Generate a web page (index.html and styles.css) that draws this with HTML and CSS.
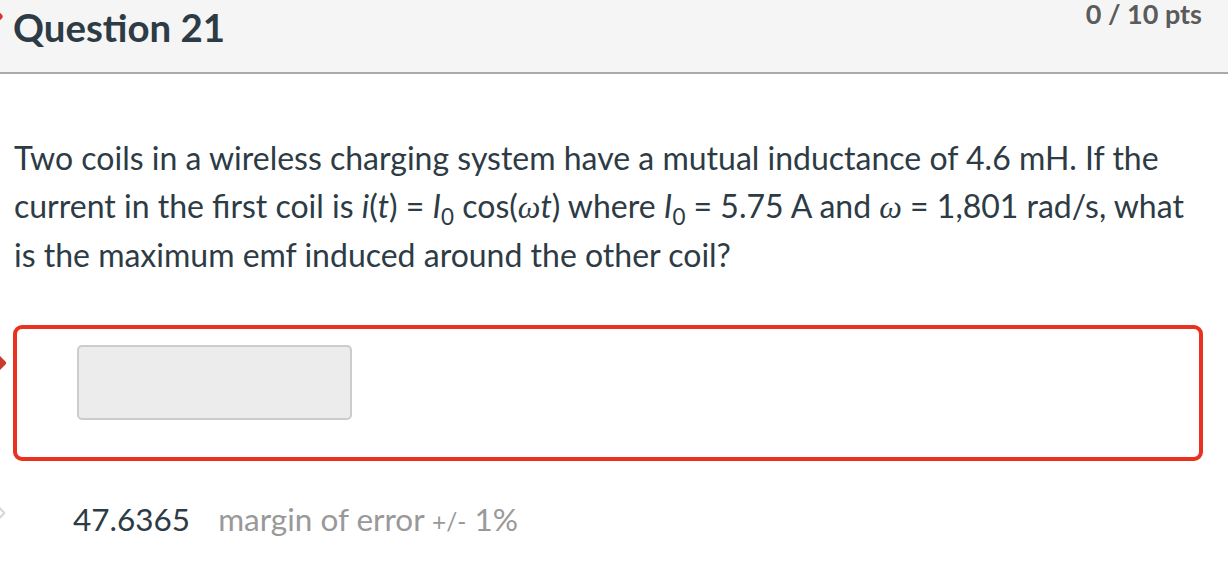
FILE: index.html
```html
<!DOCTYPE html>
<html lang="en">
<head>
<meta charset="utf-8">
<title>Question 21</title>
<link rel="stylesheet" href="styles.css">
</head>
<body>
<div class="question">
  <span class="marker marker-top"></span>
  <header class="q-header">
    <h2 class="q-title">Question 21</h2>
    <div class="q-points">0 / 10 pts</div>
  </header>
  <div class="q-text">Two coils in a wireless charging system have a mutual inductance of 4.6 mH. If the current in the first coil is <i>i</i>(<i>t</i>) = <i>I</i><sub>0</sub> cos(<i class="omega">ω</i><i>t</i>) where <i>I</i><sub>0</sub> = 5.75 A and <i class="omega">ω</i> = 1,801 rad/s, what is the maximum emf induced around the other coil?</div>
  <div class="answer-row">
    <span class="marker marker-wrong"></span>
    <div class="answer-box">
      <div class="answer-input"></div>
    </div>
  </div>
  <div class="correct-row">
    <span class="marker marker-correct"></span>
    <span class="correct-value">47.6365</span>
    <span class="margin">margin of error <span class="pm">+/-</span> 1%</span>
  </div>
</div>
</body>
</html>
```
FILE: styles.css
```css
html, body {
  margin: 0;
  padding: 0;
  background: #ffffff;
}
body {
  font-family: Lato, "Open Sans", "Liberation Sans", sans-serif;
  color: #2d3b45;
  width: 1228px;
  height: 582px;
  overflow: hidden;
}
.question {
  position: relative;
}
.q-header {
  display: flex;
  justify-content: space-between;
  align-items: flex-start;
  height: 72px;
  background: #f5f5f5;
  border-bottom: 2px solid #aaaaaa;
  padding: 0 26px 0 13px;
}
.q-title {
  margin: 0;
  padding-top: 7px;
  font-size: 38.4px;
  line-height: 40px;
  font-weight: 700;
  color: #2d3b45;
}
.q-points {
  font-size: 27px;
  line-height: 28px;
  font-weight: 700;
  color: #5b5b5b;
}
.q-text {
  padding: 60px 30px 0 14px;
  height: 144px;
  font-size: 32px;
  line-height: 48px;
}
.q-text sub {
  font-size: 0.7em;
  line-height: 0;
  vertical-align: -0.32em;
}
.q-text .omega {
  font-family: "Liberation Serif", "DejaVu Serif", serif;
}
.answer-row {
  position: relative;
  padding: 47px 25px 0 13px;
}
.answer-box {
  border: 4px solid #e8321f;
  border-radius: 9px;
  padding: 16px 0 0 60px;
  box-sizing: border-box;
  height: 136px;
}
.answer-input {
  width: 275px;
  height: 75px;
  box-sizing: border-box;
  background: #ececec;
  border: 2px solid #cccccc;
  border-radius: 5px;
}
.correct-row {
  position: relative;
  padding: 38px 0 0 73px;
  font-size: 31.5px;
  line-height: 40px;
}
.correct-value {
  color: #2d3b45;
  margin-right: 20px;
}
.margin {
  color: #999999;
}
.margin .pm {
  font-size: 24.5px;
}
.marker {
  position: absolute;
  left: -10px;
  width: 14px;
  height: 14px;
  transform: rotate(45deg);
}
.marker-top {
  top: 12px;
  left: -7px;
  width: 9px;
  height: 9px;
  background: #d8322a;
  border-radius: 3px;
}
.marker-wrong {
  top: 78px;
  background: #c93a2e;
  border-radius: 2px;
}
.marker-correct {
  top: 45px;
  left: -11px;
  background: #ffffff;
  border: 2px solid #d6d6d6;
  box-sizing: border-box;
  border-radius: 2px;
}
```
